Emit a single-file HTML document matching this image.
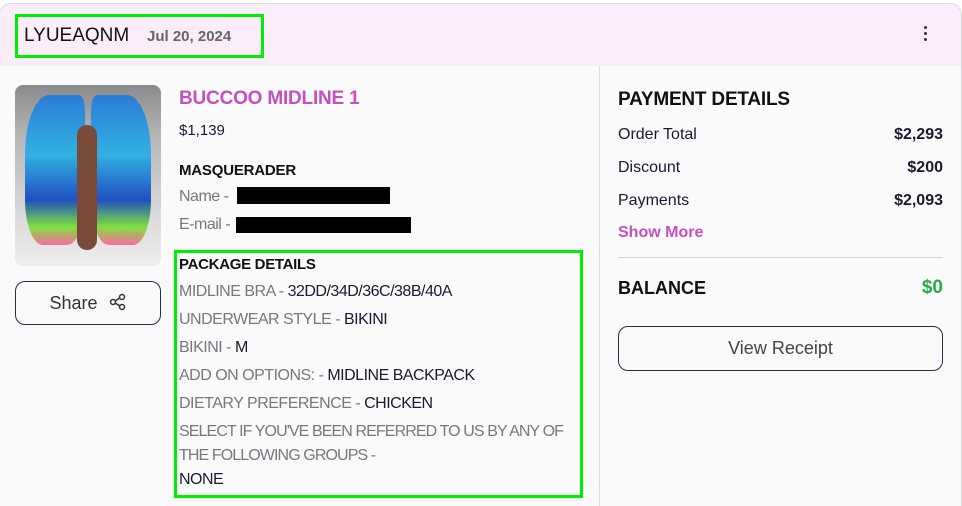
<!DOCTYPE html>
<html><head><style>
html,body{margin:0;width:962px;height:506px;overflow:hidden;background:#fff;font-family:"Liberation Sans",sans-serif;}
.card{position:absolute;left:-1px;top:3px;width:963px;height:503px;border:1px solid #d8d8dc;border-bottom:none;box-sizing:border-box;border-radius:12px 12px 0 0;background:#fafafb;overflow:hidden}
.hdr{position:absolute;left:0;top:0;width:100%;height:62px;background:#fbeefa}
.abs{position:absolute;white-space:nowrap}
.g{color:#77777f}
.k{color:#1a1a2e}
.lbl{font-size:16px;letter-spacing:-0.5px}
</style></head><body>
<div class="card">
<div class="hdr"></div>
<div class="abs" style="left:15px;top:10px;width:243px;height:38px;border:3px solid #00ee00;box-sizing:content-box"></div>
<div class="abs" style="left:24px;top:21px;font-size:19px;color:#111">LYUEAQNM</div>
<div class="abs" style="left:147px;top:24px;font-size:15px;font-weight:bold;color:#666">Jul 20, 2024</div>
<div class="abs" style="left:924px;top:22px;width:4px">
<div style="width:3px;height:3px;background:#333;border-radius:50%;margin-bottom:3px"></div>
<div style="width:3px;height:3px;background:#333;border-radius:50%;margin-bottom:3px"></div>
<div style="width:3px;height:3px;background:#333;border-radius:50%"></div></div>
<div class="abs" style="left:599px;top:62px;width:1px;height:450px;background:#dcdce0"></div>
<div class="abs" style="left:15px;top:81px;width:146px;height:181px;border-radius:8px;background:linear-gradient(180deg,#8a8a8a 0%,#b8b8b8 30%,#d8d8d8 70%,#eeeeee 100%);overflow:hidden">
<div style="position:absolute;left:10px;top:10px;width:60px;height:150px;background:linear-gradient(180deg,#2a7cd6,#32b0e0 40%,#2050c0 70%,#7fe040 88%,#ff6aa0);border-radius:40% 10% 30% 30%"></div>
<div style="position:absolute;left:76px;top:10px;width:60px;height:150px;background:linear-gradient(180deg,#2a7cd6,#32b0e0 40%,#2050c0 70%,#7fe040 88%,#ff6aa0);border-radius:10% 40% 30% 30%"></div>
<div style="position:absolute;left:62px;top:40px;width:20px;height:125px;background:#7a4a38;border-radius:10px"></div>
</div>
<div class="abs" style="left:15px;top:277px;width:144px;height:42px;border:1px solid #2a2f4a;border-radius:10px;text-align:center;line-height:42px;font-size:18px;color:#333">Share
<svg width="18" height="18" viewBox="0 0 18 18" style="vertical-align:-2px;margin-left:6px" fill="none" stroke="#333" stroke-width="1.5"><circle cx="13" cy="4" r="2.5"/><circle cx="4" cy="9" r="2.5"/><circle cx="13" cy="14" r="2.5"/><path d="M6.2 7.8L10.8 5.2M6.2 10.2L10.8 12.8"/></svg></div>
<div class="abs" style="left:179px;top:84px;font-size:19px;color:#c54fc0;font-weight:bold;letter-spacing:-0.2px">BUCCOO MIDLINE 1</div>
<div class="abs k" style="left:179px;top:118px;font-size:15px">$1,139</div>
<div class="abs" style="left:179px;top:158px;font-size:15px;color:#111;font-weight:bold;letter-spacing:-0.2px">MASQUERADER</div>
<div class="abs g lbl" style="left:179px;top:184px;font-size:16px">Name -</div>
<div class="abs" style="left:237px;top:183px;width:153px;height:17px;background:#000"></div>
<div class="abs g lbl" style="left:179px;top:212px;font-size:16px">E-mail -</div>
<div class="abs" style="left:236px;top:213px;width:175px;height:16px;background:#000"></div>
<div class="abs" style="left:174px;top:246px;width:403px;height:242px;border:3px solid #00ee00"></div>
<div class="abs" style="left:179px;top:252px;font-size:15px;font-weight:bold;color:#111;letter-spacing:-0.3px">PACKAGE DETAILS</div>
<div class="abs lbl" style="left:179px;top:279px"><span class="g">MIDLINE BRA - </span><span class="k">32DD/34D/36C/38B/40A</span></div>
<div class="abs lbl" style="left:179px;top:307px"><span class="g">UNDERWEAR STYLE - </span><span class="k">BIKINI</span></div>
<div class="abs lbl" style="left:179px;top:335px"><span class="g">BIKINI - </span><span class="k">M</span></div>
<div class="abs lbl" style="left:179px;top:363px"><span class="g">ADD ON OPTIONS: - </span><span class="k">MIDLINE BACKPACK</span></div>
<div class="abs lbl" style="left:179px;top:391px"><span class="g">DIETARY PREFERENCE - </span><span class="k">CHICKEN</span></div>
<div class="abs lbl g" style="left:179px;top:419px;letter-spacing:-0.9px">SELECT IF YOU'VE BEEN REFERRED TO US BY ANY OF</div>
<div class="abs lbl g" style="left:179px;top:443px;letter-spacing:-0.9px">THE FOLLOWING GROUPS -</div>
<div class="abs lbl k" style="left:179px;top:467px">NONE</div>
<div class="abs" style="left:618px;top:85px;font-size:19px;color:#111;font-weight:bold;letter-spacing:-0.2px">PAYMENT DETAILS</div>
<div class="abs k" style="left:618px;top:122px;font-size:16px">Order Total</div>
<div class="abs k" style="right:18px;top:122px;font-size:16px;font-weight:bold">$2,293</div>
<div class="abs k" style="left:618px;top:155px;font-size:16px">Discount</div>
<div class="abs k" style="right:18px;top:155px;font-size:16px;font-weight:bold">$200</div>
<div class="abs k" style="left:618px;top:188px;font-size:16px">Payments</div>
<div class="abs k" style="right:18px;top:188px;font-size:16px;font-weight:bold">$2,093</div>
<div class="abs" style="left:618px;top:220px;font-size:16px;color:#c54fc0;font-weight:bold">Show More</div>
<div class="abs" style="left:618px;top:253px;width:325px;height:1px;background:#cfcfd4"></div>
<div class="abs" style="left:618px;top:274px;font-size:18px;color:#111;font-weight:bold">BALANCE</div>
<div class="abs" style="right:18px;top:273px;font-size:19px;color:#2aa84a;font-weight:bold">$0</div>
<div class="abs" style="left:618px;top:322px;width:323px;height:43px;border:1px solid #2a2f4a;border-radius:10px;text-align:center;line-height:43px;font-size:18px;color:#444">View Receipt</div>
</div>
</body></html>
